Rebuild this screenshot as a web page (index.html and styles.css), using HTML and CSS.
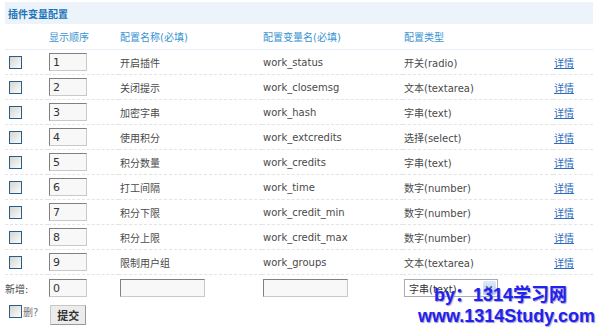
FILE: index.html
```html
<!DOCTYPE html>
<html lang="zh-CN">
<head>
    <meta charset="UTF-8">
    <title>插件变量配置</title>
    <link rel="stylesheet" href="styles.css">
</head>
<body>
    <form class="vars" method="post" action="#">
        <table class="tb">
            <colgroup>
                <col class="c-del">
                <col class="c-order">
                <col class="c-title">
                <col class="c-var">
                <col class="c-type">
                <col class="c-op">
            </colgroup>
            <tr class="caption">
                <th colspan="6">插件变量配置</th>
            </tr>
            <tr class="header">
                <td></td>
                <td>显示顺序</td>
                <td>配置名称(必填)</td>
                <td>配置变量名(必填)</td>
                <td>配置类型</td>
                <td></td>
            </tr>
            <tr>
                <td><input type="checkbox" class="chk"></td>
                <td><input type="text" class="txt order" value="1"></td>
                <td>开启插件</td>
                <td>work_status</td>
                <td>开关(radio)</td>
                <td><a href="#">详情</a></td>
            </tr>
            <tr>
                <td><input type="checkbox" class="chk"></td>
                <td><input type="text" class="txt order" value="2"></td>
                <td>关闭提示</td>
                <td>work_closemsg</td>
                <td>文本(textarea)</td>
                <td><a href="#">详情</a></td>
            </tr>
            <tr>
                <td><input type="checkbox" class="chk"></td>
                <td><input type="text" class="txt order" value="3"></td>
                <td>加密字串</td>
                <td>work_hash</td>
                <td>字串(text)</td>
                <td><a href="#">详情</a></td>
            </tr>
            <tr>
                <td><input type="checkbox" class="chk"></td>
                <td><input type="text" class="txt order" value="4"></td>
                <td>使用积分</td>
                <td>work_extcredits</td>
                <td>选择(select)</td>
                <td><a href="#">详情</a></td>
            </tr>
            <tr>
                <td><input type="checkbox" class="chk"></td>
                <td><input type="text" class="txt order" value="5"></td>
                <td>积分数量</td>
                <td>work_credits</td>
                <td>字串(text)</td>
                <td><a href="#">详情</a></td>
            </tr>
            <tr>
                <td><input type="checkbox" class="chk"></td>
                <td><input type="text" class="txt order" value="6"></td>
                <td>打工间隔</td>
                <td>work_time</td>
                <td>数字(number)</td>
                <td><a href="#">详情</a></td>
            </tr>
            <tr>
                <td><input type="checkbox" class="chk"></td>
                <td><input type="text" class="txt order" value="7"></td>
                <td>积分下限</td>
                <td>work_credit_min</td>
                <td>数字(number)</td>
                <td><a href="#">详情</a></td>
            </tr>
            <tr>
                <td><input type="checkbox" class="chk"></td>
                <td><input type="text" class="txt order" value="8"></td>
                <td>积分上限</td>
                <td>work_credit_max</td>
                <td>数字(number)</td>
                <td><a href="#">详情</a></td>
            </tr>
            <tr>
                <td><input type="checkbox" class="chk"></td>
                <td><input type="text" class="txt order" value="9"></td>
                <td>限制用户组</td>
                <td>work_groups</td>
                <td>文本(textarea)</td>
                <td><a href="#">详情</a></td>
            </tr>
            <tr class="newrow">
                <td>新增:</td>
                <td><input type="text" class="txt order" value="0"></td>
                <td><input type="text" class="txt wide"></td>
                <td><input type="text" class="txt wide"></td>
                <td>
                    <div class="sel">
                        <span>字串(text)</span>
                        <i class="arrow"></i>
                    </div>
                </td>
                <td></td>
            </tr>
            <tr class="footer">
                <td colspan="6">
                    <label class="delall"><input type="checkbox" class="chk">删?</label>
                    <button type="submit" class="btn">提交</button>
                </td>
            </tr>
        </table>
    </form>

    <div class="mark">
        <div class="mark-by">by：1314学习网</div>
        <div class="mark-url">www.1314Study.com</div>
    </div>
</body>
</html>
```

FILE: styles.css
```css
body {
    margin: 0;
    padding: 2px 7px 0 5px;
    font-family: "DejaVu Sans", "Noto Sans CJK SC", sans-serif;
    font-size: 10px;
    color: #4a4a4a;
    background: #fff;
    position: relative;
    height: 327px;
    overflow: hidden;
}

.tb {
    width: 588px;
    border-collapse: collapse;
    table-layout: fixed;
}

.c-del   { width: 43px; }
.c-order { width: 71px; }
.c-title { width: 143px; }
.c-var   { width: 141px; }
.c-type  { width: 150px; }
.c-op    { width: 40px; }

.tb td {
    height: 24px;
    padding: 0 0 0 1px;
    border-bottom: 1px dashed #e4e4e4;
    white-space: nowrap;
}

.caption th {
    height: 22px;
    padding: 0 0 0 3px;
    text-align: left;
    background: #edf3fb;
    color: #1a74b8;
    font-size: 10px;
    font-weight: bold;
}

.header td {
    height: 25px;
    color: #3a93d2;
    border-bottom: 1px solid #e6eef8;
}

.chk {
    appearance: none;
    -webkit-appearance: none;
    width: 13px;
    height: 13px;
    margin: 0 0 0 3px;
    border: 1px solid #2a5d8c;
    background: linear-gradient(135deg, #d6d6cf, #fbfbfa);
    vertical-align: middle;
}

.txt {
    box-sizing: border-box;
    height: 18px;
    padding: 0 3px;
    border: 1px solid #c9c9c9;
    border-top-color: #808080;
    border-left-color: #808080;
    background: #f8f8f8;
    font-family: "DejaVu Sans", sans-serif;
    font-size: 11px;
    color: #333;
    vertical-align: middle;
}

.order { width: 38px; }
.wide  { width: 85px; }

.tb a {
    color: #2d6cc0;
}

.newrow td {
    border-bottom: none;
    height: 26px;
}

.newrow td:first-child {
    padding-left: 0;
}

.sel {
    display: flex;
    align-items: center;
    justify-content: space-between;
    box-sizing: border-box;
    width: 94px;
    height: 18px;
    padding: 0 1px 0 4px;
    border: 1px solid #a5acb5;
    background: #fff;
    color: #333;
}

.arrow {
    width: 13px;
    height: 14px;
    border-radius: 2px;
    background: linear-gradient(#dfe9fb, #b7cdf5);
    position: relative;
}

.arrow::after {
    content: "";
    position: absolute;
    left: 3px;
    top: 3px;
    width: 4px;
    height: 4px;
    border-right: 2px solid #4d6185;
    border-bottom: 2px solid #4d6185;
    transform: rotate(45deg) scale(0.8);
}

.footer td {
    border-bottom: none;
    height: 26px;
}

.delall {
    display: inline-flex;
    align-items: center;
    width: 41px;
    color: #777;
}

.delall .chk {
    margin-right: 1px;
}

.btn {
    height: 20px;
    padding: 0 6px;
    border: 1px solid #c8c8c8;
    border-right-color: #999;
    border-bottom-color: #999;
    background: #ececec;
    font-family: "Noto Sans CJK SC", sans-serif;
    font-size: 11px;
    font-weight: bold;
    color: #333;
    vertical-align: middle;
}

/* 水印 */
.mark {
    position: absolute;
    right: 5px;
    bottom: 2px;
    text-align: right;
    font-family: "Liberation Sans", "Noto Sans CJK SC", sans-serif;
    font-weight: bold;
    font-size: 18px;
    line-height: 21px;
    color: #2222ee;
    text-shadow: 1px 1px 1px #9a9acc;
}

.mark-by {
    margin-right: 28px;
}
```
